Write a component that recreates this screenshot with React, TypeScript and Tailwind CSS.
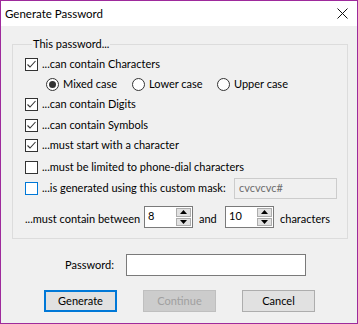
function Check({ checked = false, focused = false }: { checked?: boolean; focused?: boolean }) {
  return (
    <span
      className={
        'flex h-[13px] w-[13px] shrink-0 items-center justify-center border bg-white ' +
        (focused ? 'border-[#0078d7]' : 'border-[#333333]')
      }
    >
      {checked && (
        <svg width="11" height="11" viewBox="0 0 11 11" fill="none">
          <path d="M1.5 5.5 L4 8 L9.5 2" stroke="#333333" strokeWidth="1.1" />
        </svg>
      )}
    </span>
  )
}

function Radio({ selected = false }: { selected?: boolean }) {
  return (
    <span className="flex h-[13px] w-[13px] shrink-0 items-center justify-center rounded-full border border-[#333333] bg-white">
      {selected && <span className="h-[7px] w-[7px] rounded-full bg-[#333333]" />}
    </span>
  )
}

function CheckRow({ label, checked, className = '' }: { label: string; checked?: boolean; className?: string }) {
  return (
    <div className={'flex h-[20px] items-center gap-[4px] ' + className}>
      <Check checked={checked} />
      <span>{label}</span>
    </div>
  )
}

function Spin({ value }: { value: string }) {
  return (
    <div className="flex h-[22px] w-[49px] border border-[#7a7a7a] bg-white">
      <span className="flex-1 pl-[3px] pt-[1px] leading-[16px]">{value}</span>
      <div className="flex w-[16px] flex-col gap-[1px] py-[1px] pr-[1px]">
        <span className="flex flex-1 items-center justify-center border border-[#adadad] bg-[#e1e1e1]">
          <svg width="7" height="4" viewBox="0 0 7 4">
            <path d="M0 4 L3.5 0 L7 4 Z" fill="#000" />
          </svg>
        </span>
        <span className="flex flex-1 items-center justify-center border border-[#adadad] bg-[#e1e1e1]">
          <svg width="7" height="4" viewBox="0 0 7 4">
            <path d="M0 0 L7 0 L3.5 4 Z" fill="#000" />
          </svg>
        </span>
      </div>
    </div>
  )
}

export default function App() {
  return (
    <div
      className="flex h-[324px] w-[358px] flex-col border border-[#9e2a9c] text-[11px] leading-[16px] text-black"
      style={{ fontFamily: 'Lato, "Liberation Sans", sans-serif' }}
    >
      {/* title bar */}
      <div className="flex h-[25px] shrink-0 items-center justify-between bg-white pl-[4px] pr-[8px] text-[11.5px]">
        <span className="pt-[1px]">Generate Password</span>
        <svg width="11" height="11" viewBox="0 0 11 11" className="mr-[1px]">
          <path d="M0.5 0.5 L10.5 10.5 M10.5 0.5 L0.5 10.5" stroke="#111" strokeWidth="1" />
        </svg>
      </div>

      <div className="flex flex-1 flex-col bg-[#f0f0f0]">
        <fieldset className="ml-[11px] mt-[10px] w-[336px] border border-[#dcdcdc] pb-[10px] pl-[12px]">
          <legend className="ml-[7px] px-[1px]">This password...</legend>

          <CheckRow label="...can contain Characters" checked className="mt-[2px]" />
          <div className="flex h-[20px] items-center pl-[21px]">
            <div className="flex w-[86px] items-center gap-[4px]">
              <Radio selected />
              <span>Mixed case</span>
            </div>
            <div className="flex w-[85px] items-center gap-[4px]">
              <Radio />
              <span>Lower case</span>
            </div>
            <div className="flex items-center gap-[4px]">
              <Radio />
              <span>Upper case</span>
            </div>
          </div>
          <CheckRow label="...can contain Digits" checked />
          <CheckRow label="...can contain Symbols" checked className="mt-[1px]" />
          <CheckRow label="...must start with a character" checked />
          <CheckRow label="...must be limited to phone-dial characters" className="mt-[2px]" />

          <div className="flex h-[22px] items-center">
            <Check focused />
            <span className="ml-[4px] w-[192px]">...is generated using this custom mask:</span>
            <div className="flex h-[21px] w-[103px] border border-[#cccccc] bg-[#f0f0f0] pl-[4px] pt-[1px] text-[#6d6d6d]">
              cvcvcvc#
            </div>
          </div>

          <div className="mt-[7px] flex h-[22px] items-center">
            <span className="w-[119px] pt-[4px]">...must contain between</span>
            <Spin value="8" />
            <span className="ml-[6px] w-[26px] pt-[4px]">and</span>
            <Spin value="10" />
            <span className="ml-[6px] pt-[4px]">characters</span>
          </div>
        </fieldset>

        <div className="mt-[15px] flex items-center">
          <span className="w-[113px] text-right">Password:</span>
          <div className="ml-[12px] h-[22px] w-[180px] border border-[#7a7a7a] bg-white" />
        </div>

        <div className="mt-[14px] flex gap-[26px] pl-[43px]">
          <button className="h-[22px] w-[73px] border-2 border-[#0078d7] bg-[#e1e1e1]">Generate</button>
          <button className="h-[22px] w-[73px] border border-[#bfbfbf] bg-[#cccccc] text-[#a0a0a0]">Continue</button>
          <button className="h-[22px] w-[73px] border border-[#adadad] bg-[#e1e1e1]">Cancel</button>
        </div>
      </div>
    </div>
  )
}
